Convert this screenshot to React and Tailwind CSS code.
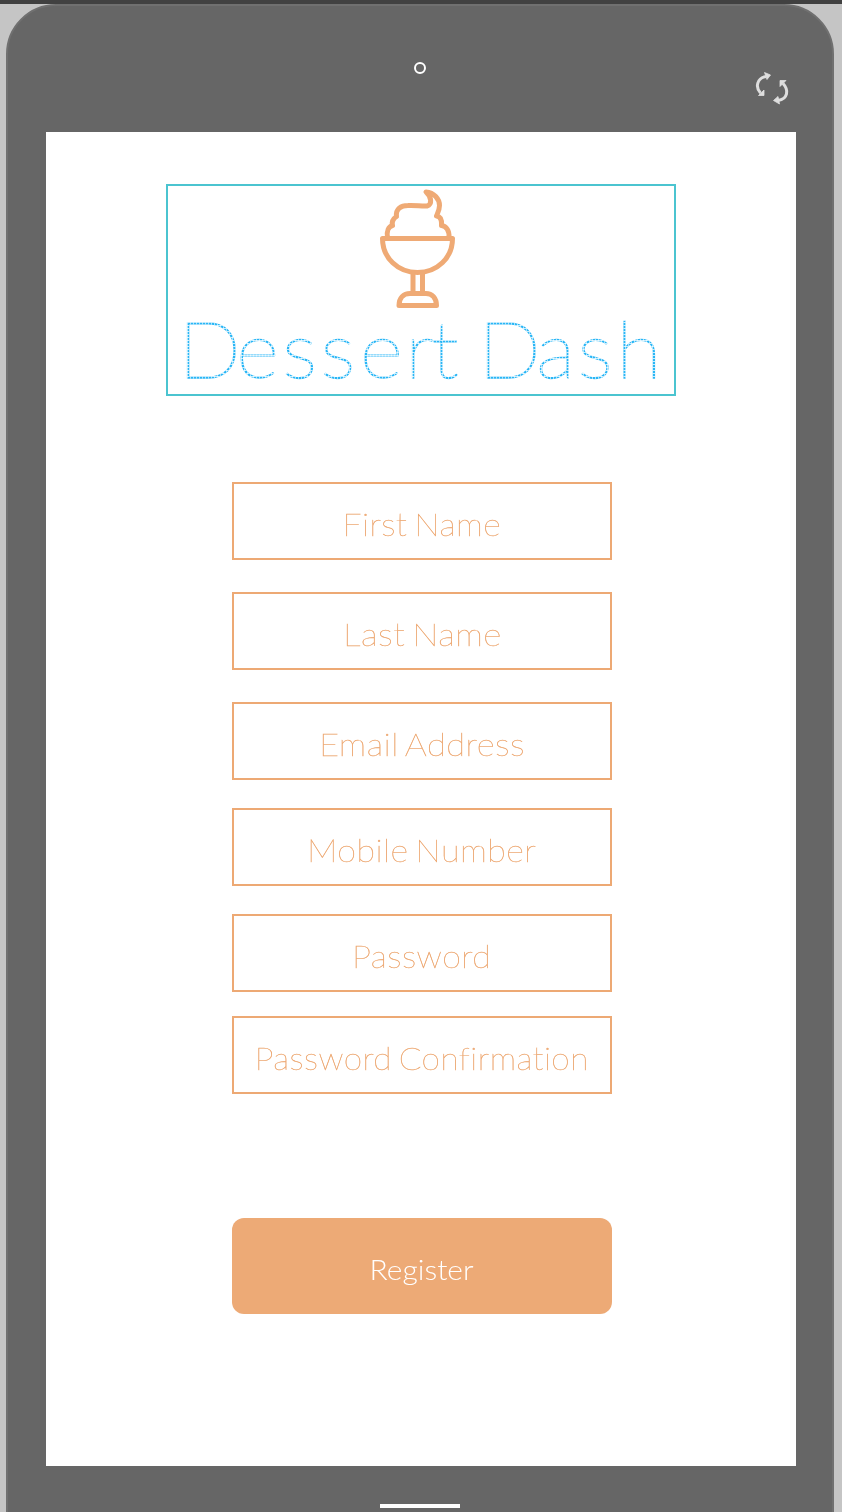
const fields = [
  { label: "First Name", gap: "mt-[86px]", text: "scale-x-[1.06]" },
  { label: "Last Name", gap: "mt-8", text: "scale-x-[1.095]" },
  { label: "Email Address", gap: "mt-8", text: "scale-x-[1.085]" },
  { label: "Mobile Number", gap: "mt-7", text: "scale-x-[1.065]" },
  { label: "Password", gap: "mt-7", text: "scale-x-[1.06]" },
  { label: "Password Confirmation", gap: "mt-6", text: "scale-x-[1.045]" },
];

function Sundae() {
  return (
    <svg className="mt-[2px] ml-[208px] block h-[122px] w-[84px]" viewBox="376 188 84 122" fill="none" stroke="#efaa75" strokeWidth="5" strokeLinejoin="round" strokeLinecap="round">
      <path d="M382.5 238.500H452.500C452.500 258 437 272.500 417.500 272.500S382.500 258 382.500 238.500Z" />
      <path d="M387.500 237.500C386.500 231 388.500 226.500 392.500 225.500C391.500 221.500 393.500 218.500 396.500 216.500C395.500 209 401 205.500 408 205.500C415 205 422 206.500 427 206C432.500 204.500 431.500 197 426 192C434 192.500 439.500 199 439.500 205.500C439.500 210 437.500 213.500 436.500 216C440.500 216.500 442 220 441.500 225.500C446.500 226 449.500 231 449 237.500" />
      <path d="M413 274V292M422.500 274V292" />
      <path d="M399 305.500C399 298 403.500 293.500 410 293.500H426C432 293.500 436.500 298 436.500 305.500Z" />
    </svg>
  );
}

function RotateIcon() {
  return (
    <svg className="absolute top-[64px] left-[744px] h-10 w-10" viewBox="752 70 40 40" fill="none" stroke="#dedede" strokeWidth="3">
      <path d="M766 76.500C757 78 755 87 760.500 93" />
      <path d="M764.500 72.500L770.500 75L767 79.500Z M764 90V95.500H758.500Z" fill="#dedede" stroke="#dedede" strokeWidth="0.8" />
      <path d="M778 100.500C788 99 789 90 783 83.500" />
      <path d="M779.500 104L773.500 100.500L778 96.500Z M780 86.500V80.500H786Z" fill="#dedede" stroke="#dedede" strokeWidth="0.8" />
    </svg>
  );
}

export default function App() {
  return (
    <div className="h-[1512px] w-[842px] overflow-hidden border-t-4 border-[#414141] bg-[#c5c5c5] pl-1.5 font-['Lato',sans-serif]">
      <div className="relative flex h-[1600px] w-[828px] flex-col rounded-[50px] border-2 border-[#707070] bg-[#666666] pl-[38px]">
        <div className="flex h-[126px] w-[748px] justify-center pt-14">
          <div className="h-3 w-3 rounded-full border-2 border-white" />
        </div>
        <RotateIcon />
        <main className="flex h-[1334px] w-[750px] flex-col bg-white pt-[52px]">
          <div className="ml-[120px] h-[212px] w-[510px] border-2 border-[#4bc4d0]">
            <Sundae />
            <h1 className="-mt-[2px] ml-[10px] h-[80px] w-[464px] origin-left scale-x-[1.05] bg-[repeating-linear-gradient(90deg,rgba(255,255,255,0.6)_0px,rgba(255,255,255,0.6)_0.952px,transparent_0.952px,transparent_2.857px),repeating-linear-gradient(180deg,transparent_0px,transparent_2px,rgba(255,255,255,0.75)_2px,rgba(255,255,255,0.75)_3px),linear-gradient(#29b6f6,#29b6f6)] bg-clip-text text-[79px] leading-[80px] font-thin tracking-[1px] [word-spacing:-6px] whitespace-nowrap text-transparent [-webkit-text-stroke:1.3px_transparent]">
              <span className="tracking-[-4.5px]">D</span>
              <span className="tracking-[3px]">e</span>
              <span className="tracking-[3.5px]">s</span>
              <span className="tracking-[4.5px]">s</span>
              <span className="tracking-[2px]">e</span>
              <span className="tracking-[-2px]">r</span>
              {"t "}
              <span className="tracking-[-4.5px]">D</span>
              <span className="tracking-[2px]">a</span>
              <span className="tracking-[4px]">s</span>h
            </h1>
          </div>
          <form className="ml-[186px] flex w-[380px] flex-col">
            {fields.map((f) => (
              <div key={f.label} className={`${f.gap} flex h-[78px] items-center justify-center border-2 border-[#eda974] pt-1.5`}>
                <span className={`${f.text} text-[32px] leading-10 font-thin tracking-[0.4px] [word-spacing:-3px] whitespace-nowrap text-[#eda974] [-webkit-text-stroke:0.4px_#eda974]`}>{f.label}</span>
              </div>
            ))}
            <button type="button" className="mt-[124px] flex h-24 items-center justify-center rounded-xl bg-[#edaa76] pt-1.5 text-[28px] font-light text-white">
              <span className="scale-x-[1.07]">Register</span>
            </button>
          </form>
        </main>
        <div className="mt-[38px] ml-[334px] h-1 w-20 bg-white" />
      </div>
    </div>
  );
}
